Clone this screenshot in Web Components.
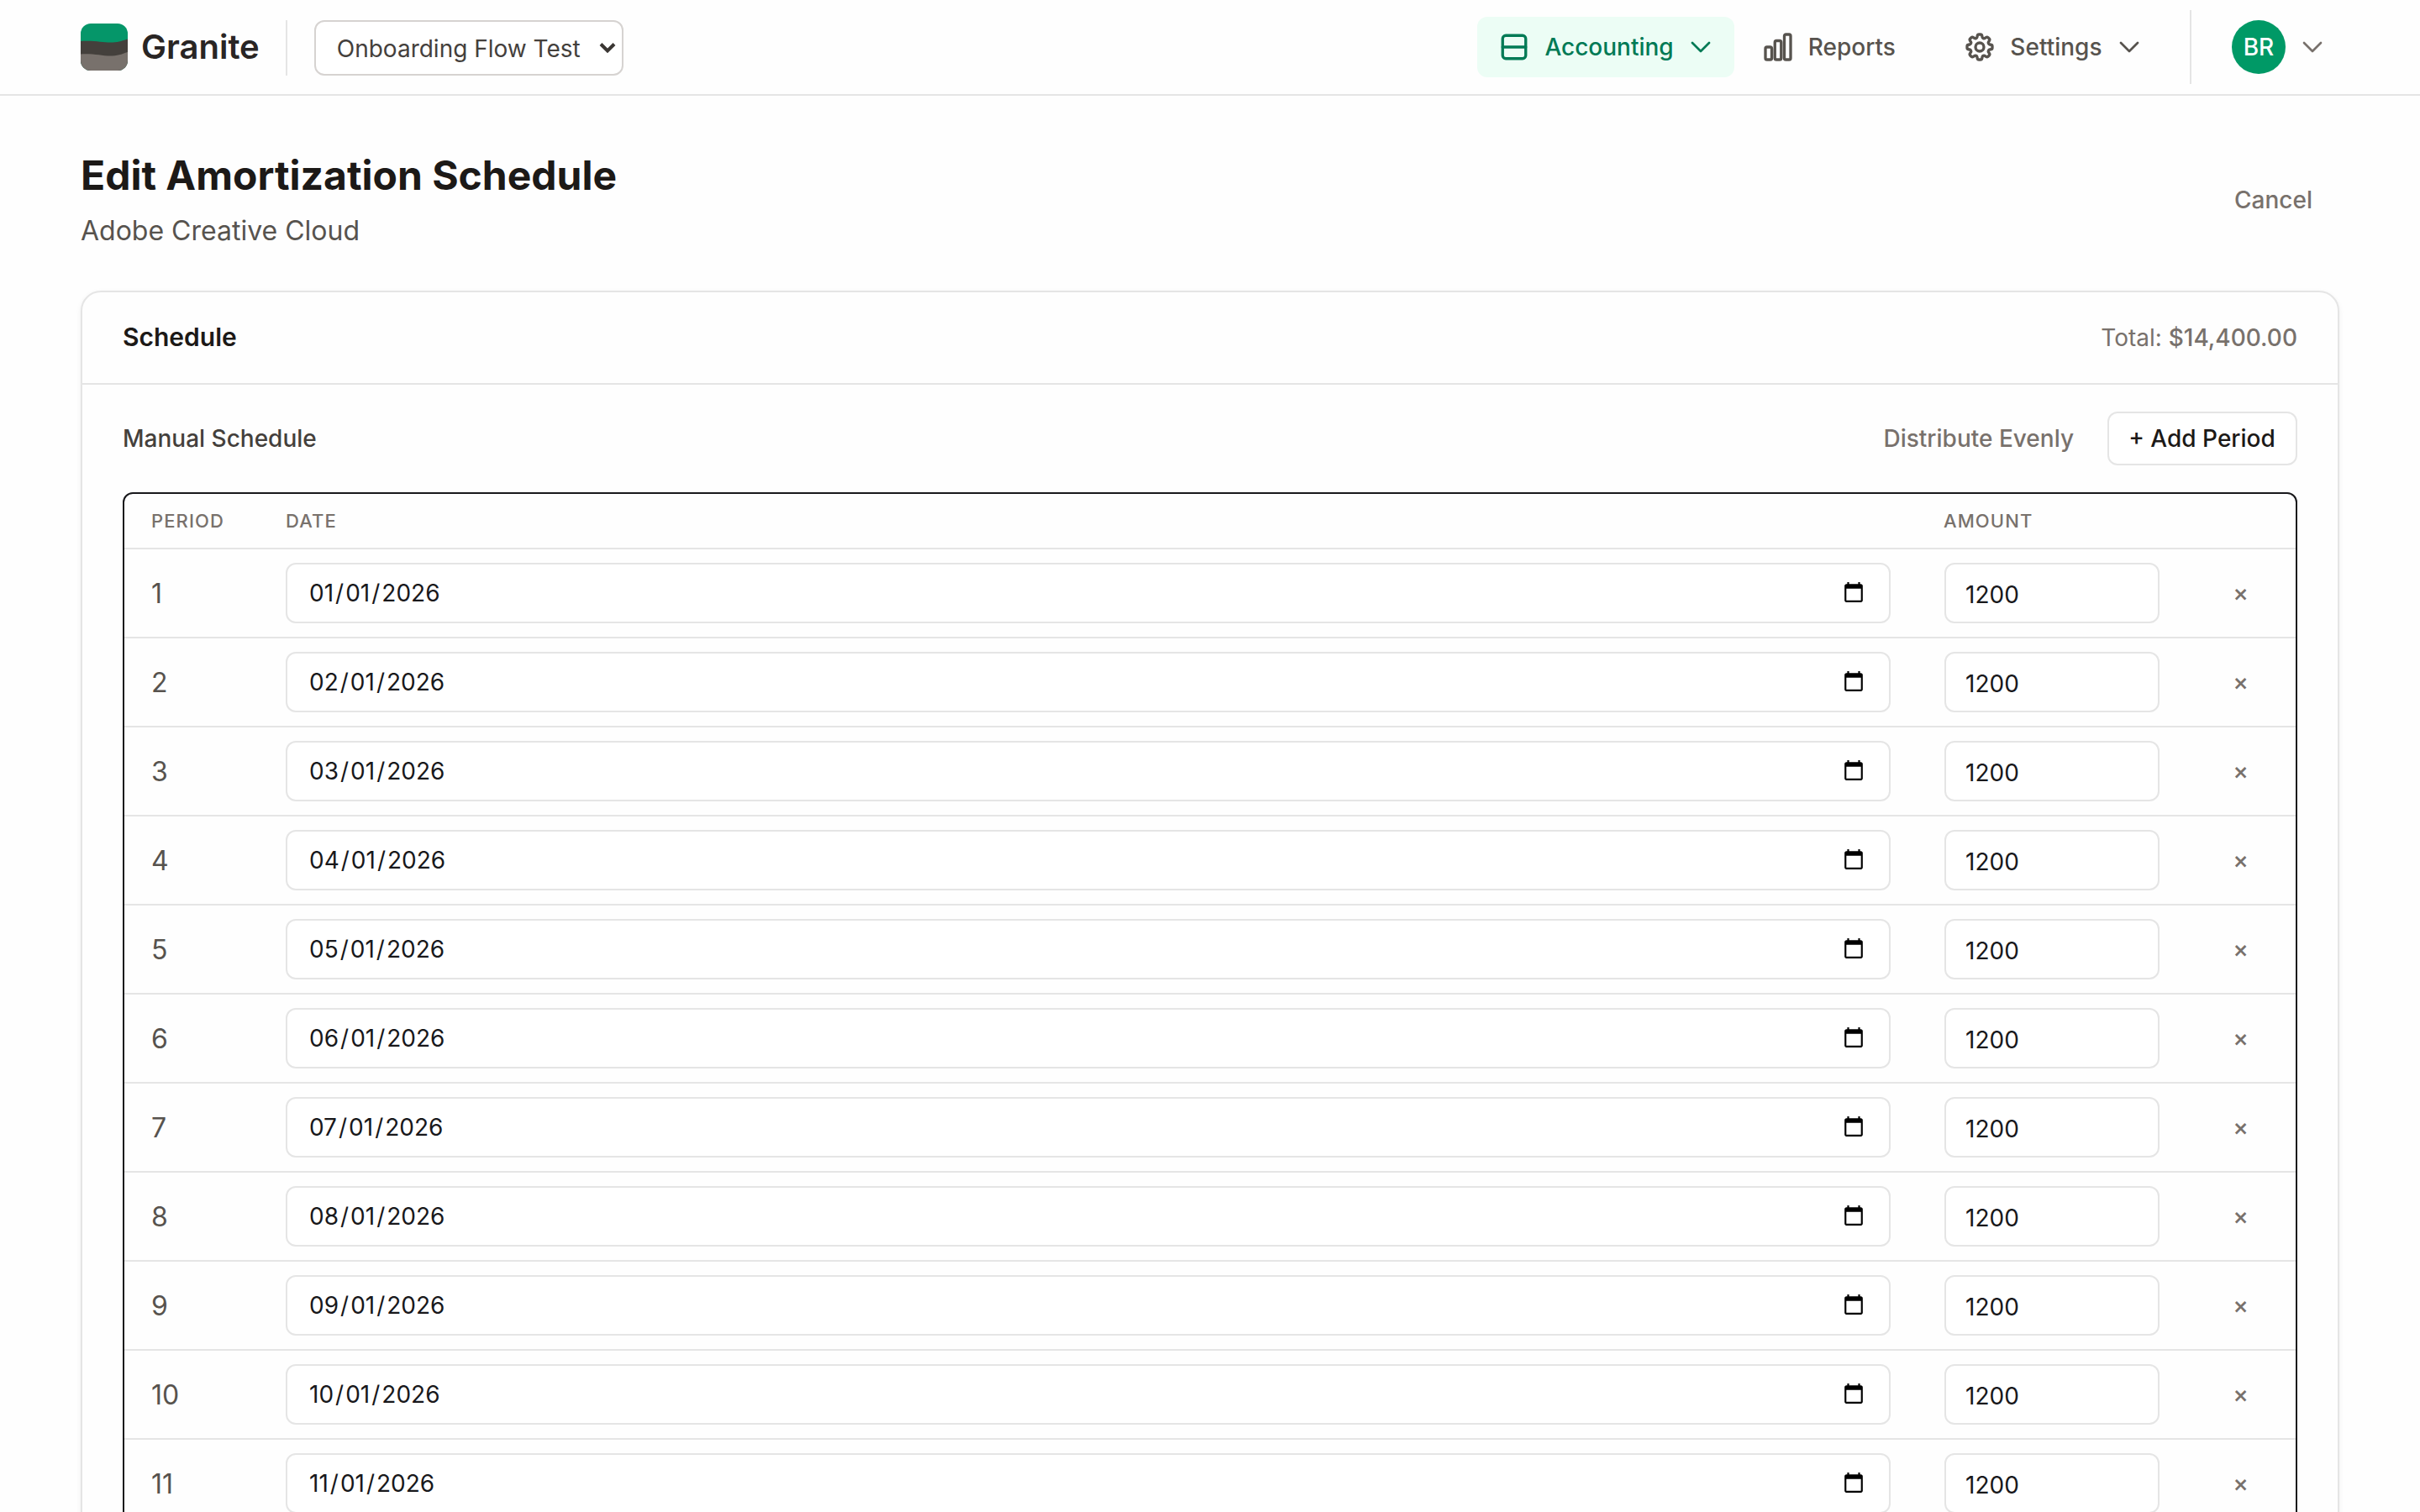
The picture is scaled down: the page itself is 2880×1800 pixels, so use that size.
<!DOCTYPE html>
<html lang="en">
<head>
<meta charset="utf-8">
<title>Edit Amortization Schedule</title>
<style>
  html, body { margin: 0; height: 1800px; overflow: hidden; background: #fefefe; }
  body { font-family: Inter, "Liberation Sans", sans-serif; font-size: 28px; color: #1c1917; }
</style>
</head>
<body>
<granite-app></granite-app>
<script>
const define = (name, html, setup) => {
  const template = document.createElement('template');
  template.innerHTML = html;
  customElements.define(name, class extends HTMLElement {
    connectedCallback() {
      if (this.shadowRoot) return;
      this.attachShadow({ mode: 'open' }).append(template.content.cloneNode(true));
      if (setup) setup(this, this.shadowRoot);
    }
  });
};

const ICONS = {
  ledger: '<rect x="3.75" y="3.75" width="16.5" height="16.5" rx="2.25"/><path d="M3.75 12h16.5"/>',
  chart: '<path d="M3 13.125C3 12.504 3.504 12 4.125 12h2.25c.621 0 1.125.504 1.125 1.125v6.75C7.5 20.496 6.996 21 6.375 21h-2.25A1.125 1.125 0 0 1 3 19.875v-6.75ZM9.75 8.625c0-.621.504-1.125 1.125-1.125h2.25c.621 0 1.125.504 1.125 1.125v11.25c0 .621-.504 1.125-1.125 1.125h-2.25a1.125 1.125 0 0 1-1.125-1.125V8.625ZM16.5 4.125c0-.621.504-1.125 1.125-1.125h2.25C20.496 3 21 3.504 21 4.125v15.75c0 .621-.504 1.125-1.125 1.125h-2.25a1.125 1.125 0 0 1-1.125-1.125V4.125Z"/>',
  cog: '<path d="M10.343 3.94c.09-.542.56-.94 1.11-.94h1.093c.55 0 1.02.398 1.11.94l.149.894c.07.424.384.764.78.93.398.164.855.142 1.205-.108l.737-.527a1.125 1.125 0 0 1 1.45.12l.773.774c.39.389.44 1.002.12 1.45l-.527.737c-.25.35-.272.806-.107 1.204.165.397.505.71.93.78l.893.15c.543.09.94.559.94 1.109v1.094c0 .55-.397 1.02-.94 1.11l-.894.149c-.424.07-.764.383-.929.78-.165.398-.143.854.107 1.204l.527.738c.32.447.269 1.06-.12 1.45l-.774.773a1.125 1.125 0 0 1-1.449.12l-.738-.527c-.35-.25-.806-.272-1.203-.107-.398.165-.71.505-.781.929l-.149.894c-.09.542-.56.94-1.11.94h-1.094c-.55 0-1.019-.398-1.11-.94l-.148-.894c-.071-.424-.384-.764-.781-.93-.398-.164-.854-.142-1.204.108l-.738.527c-.447.32-1.06.269-1.45-.12l-.773-.774a1.125 1.125 0 0 1-.12-1.45l.527-.737c.25-.35.272-.806.108-1.204-.165-.397-.506-.71-.93-.78l-.894-.15c-.542-.09-.94-.56-.94-1.109v-1.094c0-.55.398-1.02.94-1.11l.894-.149c.424-.07.765-.383.93-.78.165-.398.143-.854-.108-1.204l-.526-.738a1.125 1.125 0 0 1 .12-1.45l.773-.773a1.125 1.125 0 0 1 1.45-.12l.737.527c.35.25.807.272 1.204.107.397-.165.71-.505.78-.929l.15-.894Z"/><path d="M15 12a3 3 0 1 1-6 0 3 3 0 0 1 6 0Z"/>',
  chevron: '<path d="m19.5 8.25-7.5 7.5-7.5-7.5"/>'
};

define('line-icon', `
<style>
  :host { display: block; flex: none; width: var(--icon-size, 40px); height: var(--icon-size, 40px); }
  svg { display: block; width: 100%; height: 100%; fill: none; stroke: currentColor; stroke-linecap: round; stroke-linejoin: round; }
</style>
<svg viewBox="0 0 24 24" stroke-width="2"></svg>`, (el, root) => {
  root.querySelector('svg').innerHTML = ICONS[el.getAttribute('name')];
});

define('brand-mark', `
<style>
  :host { display: flex; align-items: center; gap: 16px; font-size: 40px; font-weight: 600; line-height: 56px; color: #292524; }
  svg { display: block; width: 56px; height: 56px; }
</style>
<svg viewBox="0 0 56 56">
  <defs><clipPath id="tile"><rect width="56" height="56" rx="12"/></clipPath></defs>
  <g clip-path="url(#tile)">
    <rect width="56" height="56" fill="#059669"/>
    <path d="M0 21C18 20 27 23 38 22.5C46 22 51 20 56 18.5V56H0Z" fill="#44403c"/>
    <path d="M0 36.5C16 35.5 26 39 38 38.5C46 38 51 35.5 56 34V56H0Z" fill="#78716c"/>
  </g>
</svg>
<slot></slot>`);

define('company-select', `
<style>
  :host { display: flex; align-items: center; justify-content: space-between; box-sizing: border-box; width: 368px; height: 66px; padding: 2px 7px 0 25px; border: 2px solid #d6d3d1; border-radius: 12px; background: #fff; color: #44403c; line-height: 40px; }
  svg { display: block; width: 20px; height: 14px; fill: none; stroke: #3a3633; stroke-width: 4; margin-top: -3px; }
</style>
<slot></slot><svg viewBox="0 0 20 14"><path d="M2 2.5 10 10.5 18 2.5"/></svg>`);

define('nav-item', `
<style>
  :host { display: flex; align-items: center; gap: 16px; height: 72px; padding: 0 24px; border-radius: 12px; font-weight: 500; line-height: 40px; color: #57534e; }
  :host([active]) { background: #ecfdf5; color: #007a55; }
  .more { --icon-size: 32px; }
</style>
<slot></slot>`, (el, root) => {
  const icon = document.createElement('line-icon');
  icon.setAttribute('name', el.getAttribute('icon'));
  root.querySelector('slot').before(icon);
  if (el.hasAttribute('menu')) {
    const more = document.createElement('line-icon');
    more.className = 'more';
    more.setAttribute('name', 'chevron');
    root.append(more);
  }
});

define('user-menu', `
<style>
  :host { display: flex; align-items: center; gap: 16px; box-sizing: border-box; height: 88px; padding: 0 16px 0 48px; border-left: 2px solid #e5e5e5; color: #78716c; --icon-size: 32px; }
  .avatar { display: flex; align-items: center; justify-content: center; width: 64px; height: 64px; border-radius: 50%; background: #009966; color: #fff; font-weight: 500; line-height: 40px; }
</style>
<div class="avatar"><slot></slot></div><line-icon name="chevron"></line-icon>`);

define('top-bar', `
<style>
  :host { display: flex; align-items: center; justify-content: space-between; box-sizing: border-box; height: 114px; padding: 0 96px; border-bottom: 2px solid #e5e5e5; background: #fefefe; }
  .left, nav { display: flex; align-items: center; }
  .company { margin: 2px 0 0 31px; padding-left: 32px; border-left: 2px solid #e5e5e5; }
  nav { gap: 8px; }
  .spaced { margin-right: 24.5px; }
  user-menu { margin-left: 24.5px; }
</style>
<div class="left">
  <brand-mark>Granite</brand-mark>
  <div class="company"><company-select>Onboarding Flow Test</company-select></div>
</div>
<nav>
  <nav-item icon="ledger" active menu>Accounting</nav-item>
  <nav-item icon="chart" class="spaced">Reports</nav-item>
  <nav-item icon="cog" menu>Settings</nav-item>
  <user-menu>BR</user-menu>
</nav>`);

define('page-heading', `
<style>
  :host { display: flex; align-items: center; justify-content: space-between; }
  h1 { margin: 0 0 11px; font-size: 48px; line-height: 62px; font-weight: 700; }
  p { margin: 0 0 -1px; font-size: 32px; line-height: 48px; color: #57534e; }
</style>
<div><h1><slot></slot></h1><p><slot name="subtitle"></slot></p></div>
<slot name="action"></slot>`);

define('ui-button', `
<style>
  :host { display: flex; align-items: center; box-sizing: border-box; height: 64px; padding: 0 24px; border-radius: 12px; font-weight: 500; line-height: 40px; color: #78716c; white-space: nowrap; }
  :host([wide]) { padding: 0 32px; }
  :host([outline]) { justify-content: center; width: 226px; padding: 0 1px 0 0; border: 2px solid #e5e5e5; background: #fff; color: #1c1917; }
</style>
<slot></slot>`);

define('date-field', `
<style>
  :host { display: flex; align-items: center; justify-content: space-between; box-sizing: border-box; height: 72px; padding: 0 29px 0 24px; border: 2px solid #e5e5e5; border-radius: 12px; background: #fff; line-height: 40px; color: #18181b; }
  .value { display: flex; }
  .value span { padding: 0 2px; }
  svg { display: block; width: 26px; height: 26px; margin-top: -2px; }
</style>
<div class="value"></div>
<svg viewBox="0 0 24 24"><path fill="#000" d="M20 3h-1V1h-2v2H7V1H5v2H4c-1.100 0-2 .9-2 2v16c0 1.100.9 2 2 2h16c1.100 0 2-.9 2-2V5c0-1.100-.9-2-2-2zm0 18H4V8h16v13z"/></svg>`, (el, root) => {
  root.querySelector('.value').innerHTML =
    el.getAttribute('value').split('/').map(part => `<span>${part}</span>`).join('/');
});

define('amount-field', `
<style>
  :host { display: flex; align-items: center; box-sizing: border-box; width: 256px; height: 72px; padding: 4px 24px 0 23px; border: 2px solid #e5e5e5; border-radius: 12px; background: #fff; line-height: 40px; color: #18181b; }
</style>
<slot></slot>`);

define('period-row', `
<style>
  :host { display: grid; grid-template-columns: 160px 1910px 320px 1fr; box-sizing: border-box; height: 106px; padding: 0 32px; border-bottom: 2px solid #e5e5e5; align-items: center; }
  .n { padding-top: 2px; font-size: 32px; line-height: 48px; color: #57534e; }
  amount-field { margin-left: 64px; }
  .remove { justify-self: end; width: 67px; text-align: center; font-weight: 500; line-height: 40px; color: #78716c; }
</style>
<div class="n"></div><amount-field>1200</amount-field><div class="remove">×</div>`, (el, root) => {
  const n = el.getAttribute('period');
  const label = root.querySelector('.n');
  label.textContent = n;
  const field = document.createElement('date-field');
  field.setAttribute('value', n.padStart(2, '0') + '/01/2026');
  label.after(field);
});

define('period-table', `
<style>
  :host { display: block; border: 2px solid #18181b; border-radius: 12px; overflow: hidden; background: #fefefe; }
  .head { display: grid; grid-template-columns: 160px 1973px 1fr; align-items: center; height: 64px; padding: 0 32px; border-bottom: 2px solid #e5e5e5; font-size: 22px; font-weight: 500; line-height: 32px; letter-spacing: 1.1px; color: #78716c; }
</style>
<div class="head"><span>PERIOD</span><span>DATE</span><span>AMOUNT</span></div>`, (el, root) => {
  for (let i = 1; i <= 11; i++) {
    const row = document.createElement('period-row');
    row.setAttribute('period', i);
    root.append(row);
  }
});

define('schedule-card', `
<style>
  :host { display: block; border: 2px solid #e5e5e5; border-radius: 24px; background: #fefefe; box-shadow: 0 2px 6px rgba(0,0,0,.06), 0 2px 4px -2px rgba(0,0,0,.06); }
  header { display: flex; align-items: center; justify-content: space-between; height: 108px; padding: 0 48px; border-bottom: 2px solid #e5e5e5; line-height: 40px; }
  h2 { margin: 0 0 2px; font-size: 30px; font-weight: 600; line-height: 40px; }
  .total { color: #78716c; }
  .total b { font-weight: 500; }
  .body { padding: 32px 48px 48px; }
  .tools { display: flex; align-items: center; margin-bottom: 32px; gap: 16px; }
  .tools .label { flex: 1; font-weight: 500; line-height: 40px; color: #44403c; }
</style>
<header><h2>Schedule</h2><div class="total">Total: <b>$14,400.00</b></div></header>
<div class="body">
  <div class="tools"><span class="label">Manual Schedule</span><ui-button>Distribute Evenly</ui-button><ui-button outline>+ Add Period</ui-button></div>
  <period-table></period-table>
</div>`);

define('granite-app', `
<style>
  :host { display: block; height: 1800px; overflow: hidden; }
  main { display: flex; flex-direction: column; gap: 48px; padding: 64px 96px; }
</style>
<top-bar></top-bar>
<main>
  <page-heading>Edit Amortization Schedule<span slot="subtitle">Adobe Creative Cloud</span><ui-button slot="action" wide>Cancel</ui-button></page-heading>
  <schedule-card></schedule-card>
</main>`);
</script>
</body>
</html>
